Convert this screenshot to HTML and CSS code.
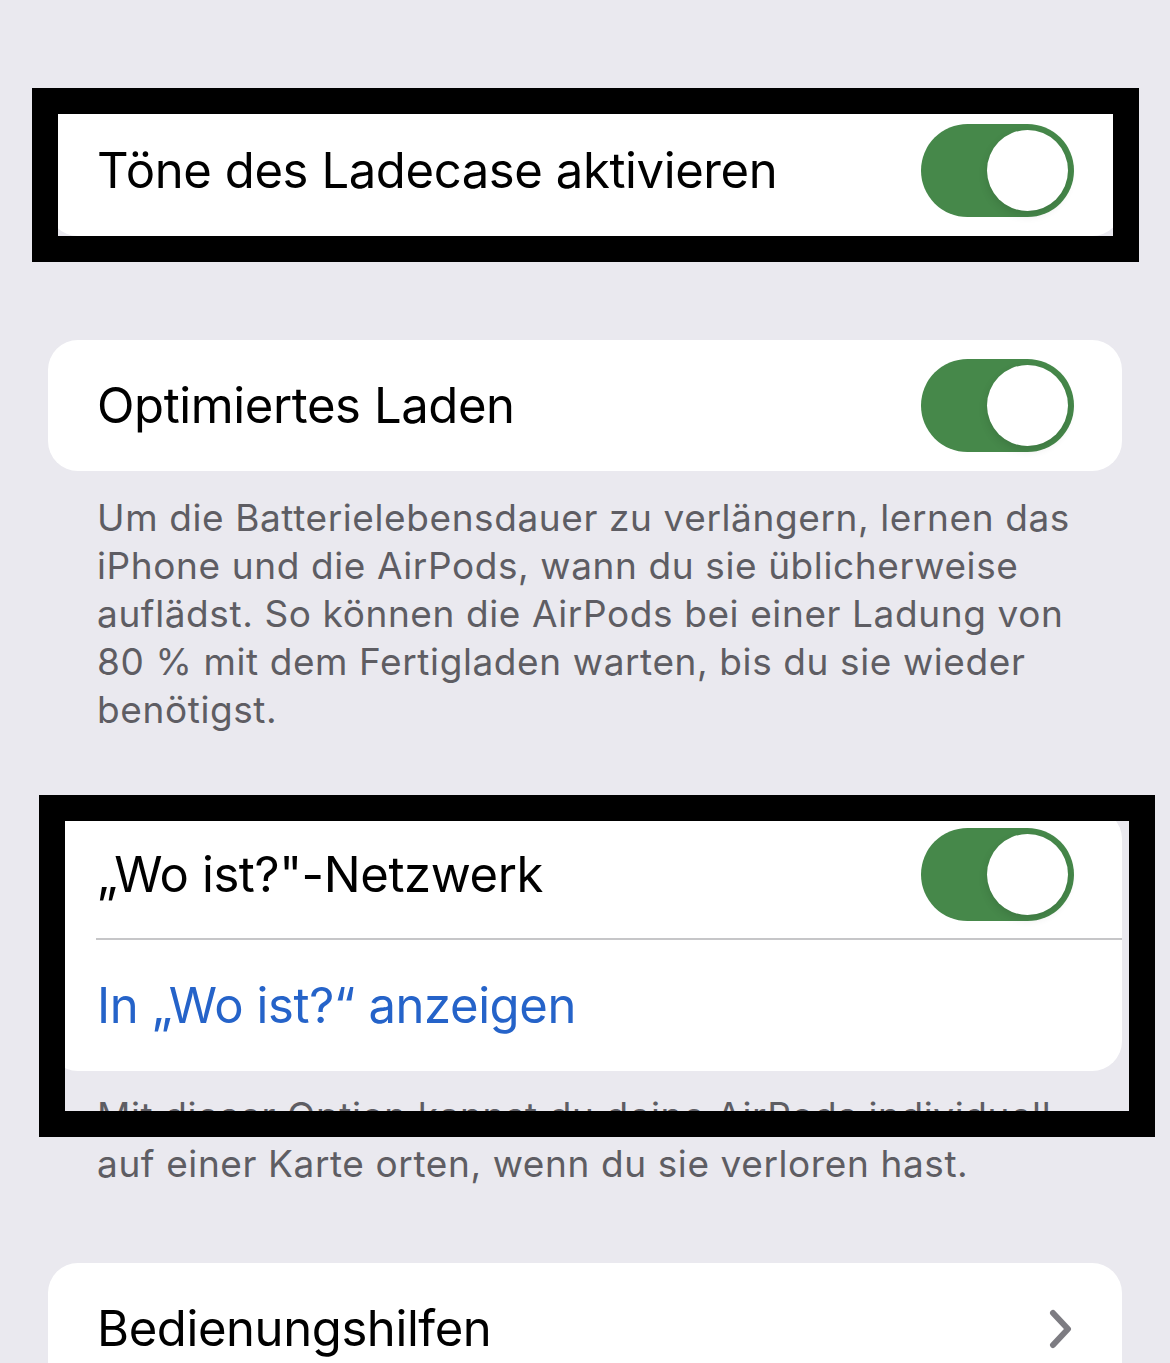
FILE: index.html
```html
<!DOCTYPE html>
<html>
<head>
    <title>AirPods Einstellungen</title>
    <meta charset="utf-8">
    <link rel="stylesheet" href="styles.css">
</head>
<body>
    <div class="page">

        <!-- Ladecase -->
        <div class="card first-card">
            <div class="row">
                <span class="label">Töne des Ladecase aktivieren</span>
                <span class="switch on"><span class="knob"></span></span>
            </div>
        </div>

        <!-- Optimiertes Laden -->
        <div class="card">
            <div class="row">
                <span class="label">Optimiertes Laden</span>
                <span class="switch on"><span class="knob"></span></span>
            </div>
        </div>
        <p class="footer">
            Um die Batterielebensdauer zu verlängern, lernen das<br>
            iPhone und die AirPods, wann du sie üblicherweise<br>
            auflädst. So können die AirPods bei einer Ladung von<br>
            80 % mit dem Fertigladen warten, bis du sie wieder<br>
            benötigst.
        </p>

        <!-- Wo ist? -->
        <div class="card">
            <div class="row divided">
                <span class="label">„Wo ist?"-Netzwerk</span>
                <span class="switch on"><span class="knob"></span></span>
            </div>
            <div class="row">
                <span class="label link">In „Wo ist?“ anzeigen</span>
            </div>
        </div>
        <p class="footer footer-tight">
            Mit dieser Option kannst du deine AirPods individuell<br>
            auf einer Karte orten, wenn du sie verloren hast.
        </p>

        <!-- Bedienungshilfen -->
        <div class="card">
            <div class="row">
                <span class="label">Bedienungshilfen</span>
                <svg class="chevron" width="24" height="40" viewBox="0 0 24 40">
                    <path d="M4 4 L19 20 L4 36" fill="none" stroke="#7d7c82" stroke-width="6" stroke-linecap="round" stroke-linejoin="round"/>
                </svg>
            </div>
        </div>
    </div>

    <!-- annotation frames drawn over the screenshot -->
    <div class="mark mark-top"></div>
    <div class="mark mark-find"></div>
</body>
</html>
```

FILE: styles.css
```css
/* Page */
body {
    margin: 0;
    background-color: #eae9ef;
    font-family: Inter, "Noto Sans", sans-serif;
    overflow: hidden;
}

.page {
    padding: 0 48px;
}

/* Grouped cards */
.card {
    background-color: #ffffff;
    border-radius: 30px;
    margin-top: 104px;
    overflow: hidden;
}

.first-card {
    margin-top: 105px;
}

.footer + .card {
    margin-top: 75px;
}

.row {
    height: 131px;
    display: flex;
    align-items: center;
    justify-content: space-between;
    padding: 0 48px 0 49px;
    position: relative;
}

.row.divided::after {
    content: "";
    position: absolute;
    left: 48px;
    right: 0;
    bottom: 0;
    height: 2px;
    background-color: #c6c6c8;
}

.label {
    font-size: 49px;
    letter-spacing: -0.4px;
    color: #000000;
}

.link {
    color: #2563c9;
}

/* Footer text under a group */
.footer {
    margin: 0;
    padding: 23px 49px 0 49px;
    font-size: 37px;
    line-height: 48px;
    letter-spacing: 0.6px;
    color: #5e5d63;
}

.footer-tight {
    padding-top: 21px;
}

/* Toggle switch */
.switch {
    width: 153px;
    height: 93px;
    border-radius: 47px;
    background-color: #46884a;
    position: relative;
    flex-shrink: 0;
}

.switch .knob {
    position: absolute;
    top: 6px;
    right: 6px;
    width: 81px;
    height: 81px;
    border-radius: 50%;
    background-color: #ffffff;
    box-shadow: 0 4px 10px rgba(0, 0, 0, 0.12);
}

.chevron {
    margin-right: 1px;
}

/* Black annotation frames */
.mark {
    position: absolute;
    border: 26px solid #000000;
    box-sizing: border-box;
}

.mark-top {
    left: 32px;
    top: 88px;
    width: 1107px;
    height: 174px;
}

.mark-find {
    left: 39px;
    top: 795px;
    width: 1116px;
    height: 342px;
}
```
